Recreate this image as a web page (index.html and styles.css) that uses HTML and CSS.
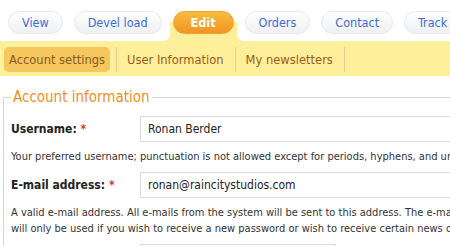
FILE: index.html
```html
<!DOCTYPE html>
<html lang="en">
<head>
    <meta charset="UTF-8">
    <meta name="viewport" content="width=device-width, initial-scale=1.0">
    <title>Edit account</title>
    <link rel="stylesheet" href="styles.css">
</head>
<body>
    <div class="page">
        <!-- Primary tabs -->
        <ul class="tabs primary">
            <li><a href="#">View</a></li>
            <li><a href="#">Devel load</a></li>
            <li class="active"><a href="#">Edit</a></li>
            <li><a href="#">Orders</a></li>
            <li><a href="#">Contact</a></li>
            <li><a href="#">Track</a></li>
        </ul>

        <!-- Secondary tabs -->
        <ul class="tabs secondary">
            <li class="active"><a href="#">Account settings</a></li>
            <li><a href="#">User Information</a></li>
            <li><a href="#">My newsletters</a></li>
        </ul>

        <form class="user-form">
            <fieldset>
                <legend>Account information</legend>

                <div class="form-item">
                    <label for="edit-name">Username: <span class="form-required">*</span></label>
                    <input type="text" id="edit-name" value="Ronan Berder">
                </div>
                <div class="description">Your preferred username; punctuation is not allowed except for periods, hyphens, and underscores.</div>

                <div class="form-item">
                    <label for="edit-mail">E-mail address: <span class="form-required">*</span></label>
                    <input type="text" id="edit-mail" value="ronan@raincitystudios.com">
                </div>
                <div class="description">A valid e-mail address. All e-mails from the system will be sent to this address. The e-mail address is not made public and<br>will only be used if you wish to receive a new password or wish to receive certain news or notifications by e-mail.</div>

                <div class="form-item">
                    <label for="edit-pass">Password:</label>
                    <input type="password" id="edit-pass" class="short">
                </div>
            </fieldset>
        </form>
    </div>
</body>
</html>
```

FILE: styles.css
```css
body {
    margin: 0;
    font-family: "DejaVu Sans Condensed", "DejaVu Sans", sans-serif;
    font-stretch: condensed;
    background: #fff;
    color: #222;
    overflow: hidden;
}

.page {
    width: 900px;
}

/* Tabs */
.tabs {
    list-style: none;
    margin: 0;
    padding: 0;
    display: flex;
}

.tabs a {
    text-decoration: none;
    display: block;
    white-space: nowrap;
}

/* Primary tabs */
.tabs.primary {
    padding: 11px 0 0 8px;
    align-items: stretch;
}

.tabs.primary li {
    margin-right: 11px;
    padding-bottom: 7px;
    position: relative;
}

.tabs.primary a {
    font-size: 12.5px;
    line-height: 21px;
    padding: 0 13px;
    color: #3a6cd6;
    border: 1px solid #e6e8ec;
    border-radius: 12px;
    background: linear-gradient(#ffffff, #eef0f4);
}

.tabs.primary li.active {
    margin: 0 8px 0 -3px;
    padding: 0 3px 7px;
    background: linear-gradient(transparent 11px, #fef09b 11px);
}

.tabs.primary li.active a {
    color: #fff;
    font-weight: bold;
    padding: 0 17px;
    border-color: #f1a02c;
    background: linear-gradient(#f9bd3c, #ef9426);
}

/* rounded white corners beside the active tab */
.tabs.primary li.active::before,
.tabs.primary li.active::after {
    content: "";
    position: absolute;
    bottom: 0;
    width: 6px;
    height: 6px;
}

.tabs.primary li.active::before {
    left: -6px;
    background: radial-gradient(circle at 0 0, #fff 5.5px, #fef09b 6px);
}

.tabs.primary li.active::after {
    right: -6px;
    background: radial-gradient(circle at 100% 0, #fff 5.5px, #fef09b 6px);
}

/* Secondary tabs */
.tabs.secondary {
    background: #fef09b;
    padding: 6px 0 4px 0;
    height: 25px;
}

.tabs.secondary li {
    padding: 0 6px 0 5px;
    border-right: 1px solid #f2c987;
    display: flex;
    align-items: center;
}

.tabs.secondary li:first-child {
    padding-left: 4px;
}

.tabs.secondary a {
    font-size: 12.8px;
    line-height: 25px;
    padding: 0 5px;
    color: #9c5a1c;
    border-radius: 5px;
}

.tabs.secondary li.active a {
    background: #f6c75e;
    color: #8a5820;
}

/* Form */
.user-form fieldset {
    margin: 12px 0 0 3px;
    padding: 10px 0 0 7px;
    border: 1px solid #d4d4d4;
}

.user-form legend {
    font-size: 15px;
    line-height: 18px;
    color: #f08f22;
    padding: 0 2px;
    margin-left: 0;
}

.form-item {
    display: flex;
    align-items: center;
}

.form-item label {
    width: 129px;
    font-size: 12px;
    font-weight: bold;
    color: #222;
}

.form-required {
    color: #e53030;
}

.form-item input {
    width: 500px;
    height: 26px;
    box-sizing: border-box;
    margin: 0;
    padding: 0 7px;
    border: 1px solid #dcdcdc;
    font-family: inherit;
    font-size: 12px;
    color: #222;
    outline: none;
}

.form-item input.short {
    width: 196px;
}

.description {
    font-size: 11px;
    line-height: 16px;
    color: #333;
    white-space: nowrap;
    margin: 7px 0;
}
```
